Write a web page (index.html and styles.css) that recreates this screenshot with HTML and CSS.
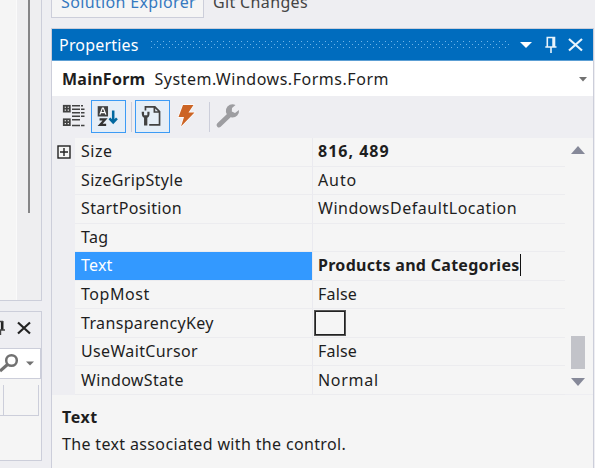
FILE: index.html
```
<!DOCTYPE html>
<html lang="en">
<head>
<meta charset="utf-8">
<title>Properties</title>
<link rel="stylesheet" href="styles.css">
</head>
<body>
<div class="app">
  <div class="left">
    <div class="designer"><div class="surface"></div><div class="track"><div class="thumb"></div></div></div>
    <div class="tool">
      <div class="tool-head">
        <svg class="cut-pin" width="6" height="16" viewBox="0 0 6 16"><path d="M2.2 1V10" stroke="#222" stroke-width="2.6"/><path d="M0 1.5H3M0 10H5M.5 10V15" fill="none" stroke="#444" stroke-width="1.4"/></svg>
        <svg class="close" width="16" height="14" viewBox="0 0 16 14"><path d="M2 1.5L14 12.5M14 1.5L2 12.5" stroke="#222" stroke-width="2.2"/></svg>
      </div>
      <div class="search">
        <svg width="40" height="29" viewBox="0 0 40 29"><circle cx="11.5" cy="11.5" r="5.3" fill="none" stroke="#717171" stroke-width="2.5"/><path d="M7.5 15.5L0 22" stroke="#717171" stroke-width="3.2"/><path d="M26 12.5H34L30 16.5Z" fill="#717171"/></svg>
      </div>
      <div class="columns"><i></i><i></i></div>
    </div>
  </div>
  <div class="right">
    <div class="tabs"><div class="tab active"><span class="t-sol">Solution Explorer</span></div><div class="tab"><span class="t-git">Git Changes</span></div></div>
    <div class="window">
      <div class="title">
        <span class="t-prop">Properties</span>
        <svg class="dots" width="360" height="9" viewBox="0 0 360 9"><defs><pattern id="d" width="6" height="8" patternUnits="userSpaceOnUse"><path d="M1 0h1v1h-1zM4 3h1v1h-1zM1 6h1v1h-1z" fill="#70b4e8"/></pattern></defs><rect width="360" height="8" fill="url(#d)"/></svg>
        <svg class="controls" width="68" height="20" viewBox="0 0 68 20"><g fill="none" stroke="#e8f4fc"><path d="M5 7H17L11 13Z" fill="#fff" stroke="none"/><path d="M32.3 12V2.5H39.5V12M30.3 12H41.5M36 12V18" stroke-width="1.6"/><path d="M38.5 2V12" stroke-width="2.5"/><path d="M54 4L67 15.5M67 4L54 15.5" stroke-width="2.2"/></g></svg>
      </div>
      <div class="object"><b class="t-main">MainForm</b><span class="t-type">System.Windows.Forms.Form</span><svg class="arrow" width="8" height="5" viewBox="0 0 8 5"><path d="M0 0H8L4 4.5Z" fill="#717171"/></svg></div>
      <div class="toolbar">
        <svg class="btn cat" width="32" height="33" viewBox="0 0 32 33"><g fill="none" stroke="#424242" stroke-width="1.8"><rect x="5.8" y="5.8" width="6" height="5.8" fill="#fff"/><path d="M5.5 8.7H12M8.8 5.5V12"/><rect x="5.8" y="19.3" width="6" height="5.8" fill="#fff"/><path d="M5.5 22.2H12M8.8 19V25.5"/><path d="M14 5.8H22M14 9.3H22M14 12.8H22M14 16.3H22M14 19.8H22M14 25.5H22" stroke-width="1.5"/><path d="M23 5.8H25M23 9.3H26.5M23 12.8H26.5M23 16.3H26.5M23 25.5H26.5" stroke-width="1.5"/></g></svg>
        <svg class="btn on first" width="35" height="33" viewBox="0 0 35 33"><rect x="6" y="5.5" width="11" height="11" fill="#424242"/><path d="M8.3 14.5L11 7.5H12L14.7 14.5M9.5 12.3H13.5" fill="none" stroke="#fff" stroke-width="1.3"/><path d="M8 19.5H14L8.5 25.5H15" fill="none" stroke="#333" stroke-width="2.3"/><path d="M22.5 10V23M18.5 18.5L22.5 22.7L26.5 18.5" fill="none" stroke="#0068a0" stroke-width="2.7"/></svg>
        <i class="sep"></i>
        <svg class="btn on" width="35" height="33" viewBox="0 0 35 33"><path d="M10 10V6.3H20L25 11.3V25.5H14M19.5 6.5V11.7H25" fill="none" stroke="#424242" stroke-width="1.8"/><path d="M6 11.5C6 15 6.5 17 8.5 17.8V26H12V17.8C14 17 14.5 15 14.3 11.5H12V15.3H8.5V11.5Z" fill="#424242"/></svg>
        <svg class="btn bolt" width="32" height="33" viewBox="0 0 32 33"><path d="M12 5H22.5L17.5 12.5H23.5L10 26.5L13 17H7.5Z" fill="#cc6425" stroke="#fff" stroke-width="1.3" paint-order="stroke"/></svg>
        <i class="sep second"></i>
        <svg class="btn wrench" width="32" height="33" viewBox="0 0 32 33"><path d="M7 25L18 14.5" stroke="#9d9da1" stroke-width="4.8" stroke-linecap="round"/><path d="M23.5 5A6.6 6.6 0 1 0 27 10L23 13L19.8 11.5L20 8Z" fill="#9d9da1"/></svg>
      </div>
      <div class="body">
        <div class="gutter"><svg width="14" height="14" viewBox="0 0 14 14"><rect x="1" y="1" width="12" height="12" fill="#f5f5f5" stroke="#222" stroke-width="1.4"/><path d="M3 7H11M7 3V11" stroke="#222" stroke-width="1.4"/></svg></div>
        <div class="grid">
          <span><em class="n1">Size</em></span><span><b class="v1">816, 489</b></span>
          <span><em class="n2">SizeGripStyle</em></span><span><em class="v2">Auto</em></span>
          <span><em class="n3">StartPosition</em></span><span><em class="v3">WindowsDefaultLocation</em></span>
          <span><em class="n4">Tag</em></span><span></span>
          <span class="selected"><em class="n5">Text</em></span><span><b class="v5">Products and Categories</b><i class="caret"></i></span>
          <span><em class="n6">TopMost</em></span><span><em class="v6">False</em></span>
          <span><em class="n7">TransparencyKey</em></span><span><i class="swatch"></i></span>
          <span><em class="n8">UseWaitCursor</em></span><span><em class="v6">False</em></span>
          <span><em class="n9">WindowState</em></span><span><em class="v9">Normal</em></span>
        </div>
        <div class="scroll">
          <svg width="14" height="8" viewBox="0 0 14 8"><path d="M0 8H14L7 0Z" fill="#868999"/></svg>
          <div class="bar"></div>
          <svg width="14" height="8" viewBox="0 0 14 8"><path d="M0 0H14L7 8Z" fill="#868999"/></svg>
        </div>
      </div>
      <div class="help"><b class="h1">Text</b><em class="h2">The text associated with the control.</em></div>
    </div>
  </div>
</div>
</body>
</html>
```
FILE: styles.css
```
* { box-sizing: border-box; }
body { margin: 0; background: #eeeef2; overflow: hidden; font: 16px "Noto Sans", sans-serif; letter-spacing: .35px; color: #1e1e1e; }
em { font-style: normal; }
svg { display: block; flex: none; }
.app { width: 595px; height: 468px; display: flex; gap: 9px; overflow: hidden; }
.left { width: 42px; display: flex; flex-direction: column; gap: 10px; flex: none; }
.designer { height: 301px; display: flex; border: solid #ccceda; border-width: 0 1px 1px 0; background: #eeeef0; }
.surface { width: 16px; background: #f5f5f5; }
.track { padding-left: 11px; border-left: 1px solid #fafafa; }
.thumb { width: 2px; height: 213px; background: #858587; }
.tool { height: 150px; border: solid #ccceda; border-width: 1px 1px 1px 0; background: #f5f5f5; }
.tool-head { height: 36px; display: flex; padding: 8px 0 0; background: #eeeef2; }
.close { margin: 1px 0 0 10px; }
.search { height: 31px; border: solid #ccceda; border-width: 1px 1px 1px 0; background: #fff; }
.columns { height: 37px; display: flex; padding-top: 6px; border-bottom: 1px solid #ccceda; background: #f5f5f5; width: 39px; }
.columns i { width: 4px; border-right: 1px solid #ccceda; }
.columns i + i { width: 35px; }
.right { width: 543px; flex: none; }
.tabs { height: 28px; display: flex; line-height: 20px; }
.tab { height: 18px; padding-left: 9px; color: #444; }
.tab span { display: block; margin-top: -8px; }
.tab.active { width: 153px; border: solid #ccceda; border-width: 0 1px 1px; background: #f5f5f5; color: #3579c0; }
.window { height: 440px; border: solid #ccceda; border-width: 1px 1px 0; background: #f5f5f5; }
.title { height: 32px; padding-left: 7px; display: flex; align-items: center; border-bottom: 1px solid #5c9fd4; background: #006cbe; color: #fff; }
.t-prop { width: 91px; letter-spacing: .2px; }
.dots { margin-top: 2px; }
.controls { margin-left: 5px; }
.object { height: 35px; padding: 0 6px 0 10px; display: flex; align-items: center; background: #fff; }
.t-main { letter-spacing: .25px; }
.t-type { margin-left: 9px; letter-spacing: .53px; }
.arrow { margin-left: auto; margin-top: 2px; }
.toolbar { height: 42px; padding: 4px 0 0 6px; display: flex; background: #eeeef2; }
.on { border: 1.5px solid #3c9bf5; background: #e5eef7; }
.first { margin-left: 1px; }
.sep { width: 1px; height: 30px; margin: 2px 3px 0 5px; background: #ccceda; }
.bolt { margin-left: 1px; }
.sep.second { margin: 2px 2px 0 6px; }
.body { height: 257px; display: flex; border-bottom: 1px solid #eeeef2; }
.gutter { width: 23px; padding: 7px 0 0 5px; background: #eeeef2; }
.grid { width: 490px; display: grid; grid-template-columns: 238px 252px; grid-template-rows: repeat(9, 28.55px); }
.grid > span { padding: 0 0 1px 6px; display: flex; align-items: center; border-bottom: 1px solid #ececef; border-right: 1px solid #eaeaef; }
.grid > span:nth-child(even) { border-right: 0; padding-left: 5px; }
.grid > .selected { background: #3399ff; color: #fff; }
.n1, .n6, .h1 { letter-spacing: .55px; }
.n5, .v6 { letter-spacing: .2px; }
.v1 { letter-spacing: 1px; }
.v2 { letter-spacing: .9px; }
.v3 { letter-spacing: .53px; }
.v5 { letter-spacing: .29px; }
.v9 { letter-spacing: .7px; }
.caret { width: 1px; height: 22px; background: #111; }
.swatch { width: 30px; height: 24px; border: 1.5px solid #222; outline: .5px solid #555; margin-left: -3px; }
.scroll { padding: 8px 0 8px 6px; display: flex; flex-direction: column; }
.bar { width: 14px; height: 33px; margin: auto 0 9px; background: #c2c3c9; }
.help { padding: 11px 0 0 10px; display: flex; flex-direction: column; line-height: 22px; gap: 5px; }
b, em, .title span, .tab span, .object span { white-space: nowrap; }
```
